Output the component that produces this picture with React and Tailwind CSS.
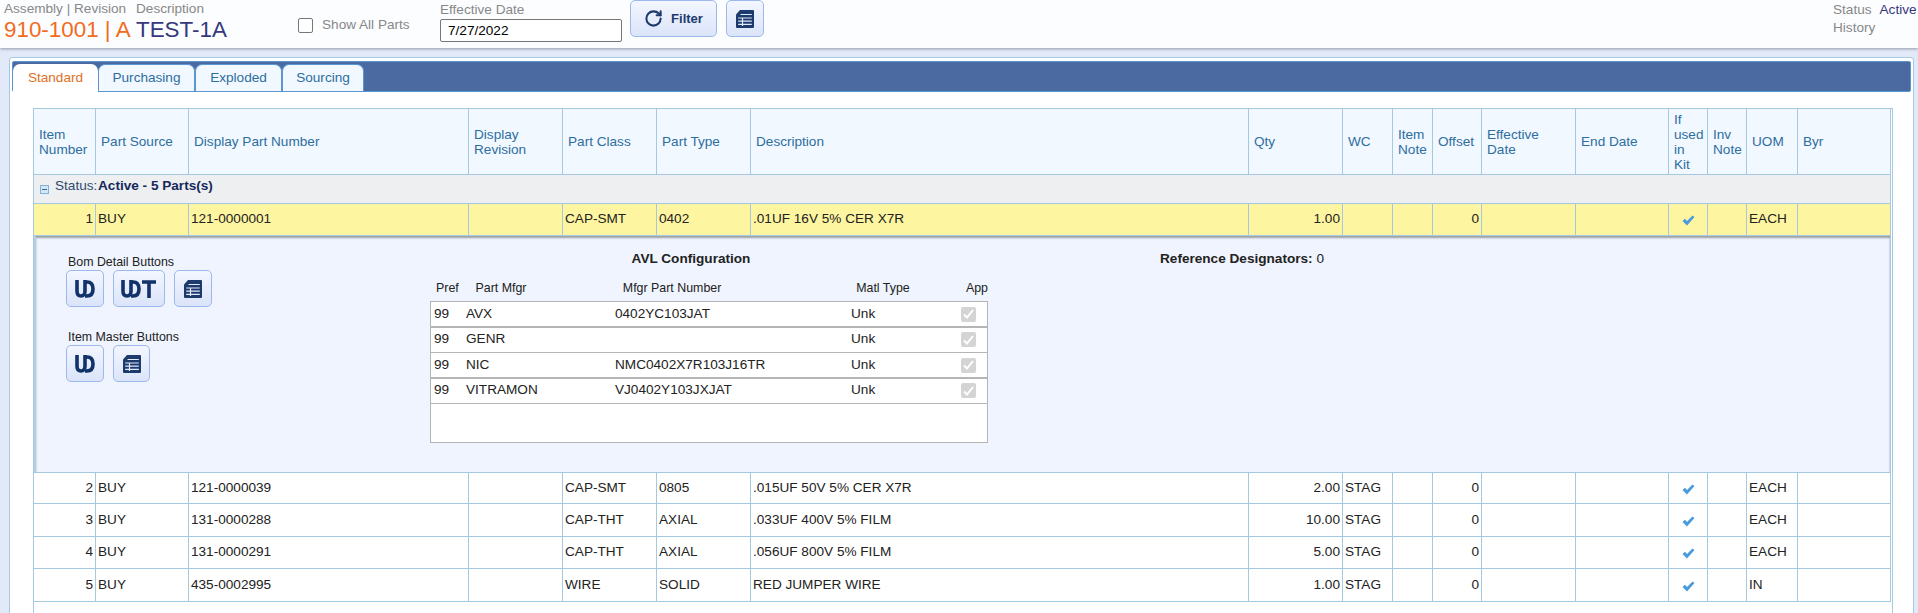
import React from 'react';
import { RotateCw } from 'lucide-react';

const COLS = [
  { key: 'item', label: 'Item\nNumber', w: 62 },
  { key: 'source', label: 'Part Source', w: 93 },
  { key: 'part', label: 'Display Part Number', w: 280 },
  { key: 'rev', label: 'Display\nRevision', w: 94 },
  { key: 'cls', label: 'Part Class', w: 94 },
  { key: 'type', label: 'Part Type', w: 94 },
  { key: 'desc', label: 'Description', w: 498 },
  { key: 'qty', label: 'Qty', w: 94 },
  { key: 'wc', label: 'WC', w: 50 },
  { key: 'note', label: 'Item\nNote', w: 40 },
  { key: 'offset', label: 'Offset', w: 49 },
  { key: 'eff', label: 'Effective\nDate', w: 94 },
  { key: 'end', label: 'End Date', w: 93 },
  { key: 'kit', label: 'If\nused\nin\nKit', w: 39 },
  { key: 'inv', label: 'Inv\nNote', w: 39 },
  { key: 'uom', label: 'UOM', w: 51 },
  { key: 'byr', label: 'Byr', w: 93 },
];

const ROWS = [
  { n: 2, part: '121-0000039', cls: 'CAP-SMT', type: '0805', desc: '.015UF 50V 5% CER X7R', qty: '2.00', uom: 'EACH', h: 'h-[31px]' },
  { n: 3, part: '131-0000288', cls: 'CAP-THT', type: 'AXIAL', desc: '.033UF 400V 5% FILM', qty: '10.00', uom: 'EACH', h: 'h-[33px]' },
  { n: 4, part: '131-0000291', cls: 'CAP-THT', type: 'AXIAL', desc: '.056UF 800V 5% FILM', qty: '5.00', uom: 'EACH', h: 'h-[32px]' },
  { n: 5, part: '435-0002995', cls: 'WIRE', type: 'SOLID', desc: 'RED JUMPER WIRE', qty: '1.00', uom: 'IN', h: 'h-[33px]' },
];

const AVL = [
  { mfgr: 'AVX', num: '0402YC103JAT', line: 'h-[26px] border-b-2' },
  { mfgr: 'GENR', num: '', line: 'h-[25px] border-b pb-[1px]' },
  { mfgr: 'NIC', num: 'NMC0402X7R103J16TR', line: 'h-[26px] border-b-2' },
  { mfgr: 'VITRAMON', num: 'VJ0402Y103JXJAT', line: 'h-[25px] border-b pb-[1px]' },
];

const cell = 'border-r border-b border-[#a6c9e2] px-[2px] align-middle text-[13.6px] leading-[15px] text-[#222]';

const TableIcon = ({ size = 20 }) => (
  <svg width={size} height={size} viewBox="0 0 20 20">
    <path d="M5 1H18a1 1 0 0 1 1 1V18a1 1 0 0 1-1 1H2a1 1 0 0 1-1-1V5.500Z" fill="#1d3a6d" />
    <path d="M5.500 5.500H16.800M3.200 9H16.800M3.200 12.200H16.800M3.200 15.400H16.800M7.500 9V17" stroke="#e3eafa" strokeWidth="1.200" fill="none" />
  </svg>
);

// the U and D run together in this glyph, so it is drawn as one mark
const UdIcon = ({ withT }) => (
  <svg width={withT ? 36 : 20} height="18" viewBox={withT ? '0 0 36 18' : '0 0 20 18'} fill="none" stroke="#12326a" strokeWidth="3.600">
    <path d="M2 0V11Q2 16 6 16Q10 16 10 11V0" />
    <path d="M10 2H12Q18 2 18 9Q18 16 12 16H10" />
    {withT && <path d="M21 2H35M28 2V18" />}
  </svg>
);

const IconButton = ({ className, children }) => (
  <button className={`flex items-center justify-center rounded-[5px] border border-[#9db8ec] bg-gradient-to-b from-[#f3f6ff] to-[#dbe4f9] ${className}`}>
    {children}
  </button>
);

const Check = () => (
  <svg width="13" height="11" viewBox="0 0 13 11" className="mx-auto mt-[4px]">
    <path d="M0.500 6L3 3.800L5 6L10.500 0.500L12.500 2L5 10.500Z" fill="#4a9bdc" />
  </svg>
);

const Header = () => (
  <div className="relative z-10 flex h-[48px] bg-[#fcfdff] text-[#888] shadow-[0_1px_3px_rgba(0,0,0,0.35)]">
    <div className="w-[298px] pl-[4px]">
      <div className="flex h-[18px] items-center text-[13.6px] leading-[18px]">
        <span className="w-[132px]">Assembly | Revision</span>
        <span>Description</span>
      </div>
      <div className="flex text-[22.4px] leading-[24px]">
        <span className="w-[132px] text-[#f26b21]">910-1001 | A</span>
        <span className="text-[#36387d]">TEST-1A</span>
      </div>
    </div>
    <label className="flex w-[142px] items-center pt-[2px] text-[13.6px]">
      <input type="checkbox" className="h-[15px] w-[15px] appearance-none rounded-[2px] border border-[#777] bg-white" />
      <span className="ml-[9px]">Show All Parts</span>
    </label>
    <div className="w-[190px]">
      <div className="h-[18px] text-[13.6px] leading-[20px]">Effective Date</div>
      <input
        readOnly
        value="7/27/2022"
        className="h-[23px] w-[182px] rounded-[2px] border border-[#767676] bg-white px-[7px] text-[13.6px] text-black outline-none"
      />
    </div>
    <IconButton className="h-[37px] w-[87px] gap-[8px]">
      <RotateCw size={19} strokeWidth={2.6} color="#1d3a6d" />
      <span className="text-[13px] font-bold text-[#1d3a6d]">Filter</span>
    </IconButton>
    <IconButton className="ml-[9px] h-[37px] w-[38px]">
      <TableIcon />
    </IconButton>
    <div className="ml-auto w-[85px] pt-[1px] text-[13.6px] leading-[18px]">
      <div className="whitespace-nowrap">
        <span className="mr-[8px]">Status</span>
        <span className="text-[#36387d]">Active</span>
      </div>
      <div>History</div>
    </div>
  </div>
);

const TABS = [
  { label: 'Standard', className: 'mb-[-1px] h-[28px] w-[85px] bg-white text-[#e0701f]' },
  { label: 'Purchasing', className: 'h-[27px] w-[97px] border border-b-0 border-[#5a96d0] bg-[#f1f8ff] text-[#2e6e9e]' },
  { label: 'Exploded', className: 'h-[27px] w-[87px] border border-b-0 border-[#5a96d0] bg-[#f1f8ff] text-[#2e6e9e]' },
  { label: 'Sourcing', className: 'h-[27px] w-[82px] border border-b-0 border-[#5a96d0] bg-[#f1f8ff] text-[#2e6e9e]' },
];

const Tabs = () => (
  <div className="ml-[2px] mr-[2px] mt-[3px] flex h-[31px] items-end rounded-[2px] border border-[#5a96d0] bg-[#4a6aa1]">
    {TABS.map((tab) => (
      <div key={tab.label} className={`flex items-center justify-center rounded-t-[7px] text-[13.6px] ${tab.className}`}>
        {tab.label}
      </div>
    ))}
  </div>
);

const AvlGrid = () => (
  <div className="w-[558px] shrink-0 pt-[14px]">
    <div className="pr-[36px] text-center text-[13.6px] font-bold leading-[18px] text-[#222]">AVL Configuration</div>
    <div className="mt-[11px] flex h-[18px] text-[12.4px] leading-[18px] text-[#222]">
      <span className="ml-[6px] w-[40px]">Pref</span>
      <span className="w-[149px]">Part Mfgr</span>
      <span className="w-[236px]">Mfgr Part Number</span>
      <span className="w-[111px]">Matl Type</span>
      <span>App</span>
    </div>
    <div className="mt-[4px] h-[142px] w-[558px] border border-[#b5b5b5] bg-white text-[13.6px] text-[#222]">
      {AVL.map((r) => (
        <div key={r.mfgr} className={`flex items-center border-[#b5b5b5] ${r.line}`}>
          <span className="ml-[3px] w-[32px]">99</span>
          <span className="w-[149px]">{r.mfgr}</span>
          <span className="w-[236px]">{r.num}</span>
          <span className="w-[110px]">Unk</span>
          <span className="flex h-[15px] w-[15px] items-center justify-center rounded-[2px] bg-[#d4d4d4]">
            <svg width="11" height="10" viewBox="0 0 11 10" fill="none" stroke="#fff" strokeWidth="2">
              <path d="M1 5.500L4 8.500L10 1" />
            </svg>
          </span>
        </div>
      ))}
    </div>
  </div>
);

const Detail = () => (
  <div className="flex h-[236px] border-l-[2px] border-[#b3cfe0] bg-[#eff4fe] shadow-[inset_0_2px_2px_rgba(90,90,90,0.55)]">
    <div className="w-[394px] shrink-0 pl-[30px] pt-[17px] text-[12.4px] leading-[18px] text-[#222]">
      <div className="ml-[2px]">Bom Detail Buttons</div>
      <div className="mt-[-1px] flex gap-[9px]">
        <IconButton className="h-[37px] w-[38px]"><UdIcon /></IconButton>
        <IconButton className="h-[37px] w-[52px]"><UdIcon withT /></IconButton>
        <IconButton className="h-[37px] w-[38px]"><TableIcon /></IconButton>
      </div>
      <div className="ml-[2px] mt-[21px]">Item Master Buttons</div>
      <div className="mt-[-1px] flex gap-[9px]">
        <IconButton className="h-[37px] w-[38px]"><UdIcon /></IconButton>
        <IconButton className="h-[37px] w-[37px]"><TableIcon /></IconButton>
      </div>
    </div>
    <AvlGrid />
    <div className="ml-[172px] pt-[14px] text-[13.6px] leading-[18px] text-[#222]">
      <span className="font-bold">Reference Designators:</span> 0
    </div>
  </div>
);

const RowCells = ({ n, part, cls, type, desc, qty, wc, uom, tone = '' }) => {
  const td = `${cell} ${tone} pb-[2px]`;
  return (
    <>
      <td className={`${td} text-right`}>{n}</td>
      <td className={td}>BUY</td>
      <td className={td}>{part}</td>
      <td className={td} />
      <td className={td}>{cls}</td>
      <td className={td}>{type}</td>
      <td className={td}>{desc}</td>
      <td className={`${td} text-right`}>{qty}</td>
      <td className={td}>{wc}</td>
      <td className={td} />
      <td className={`${td} text-right`}>0</td>
      <td className={td} />
      <td className={td} />
      <td className={td}><Check /></td>
      <td className={td} />
      <td className={td}>{uom}</td>
      <td className={td} />
    </>
  );
};

const BomTable = () => (
  <div className="ml-[23px] h-[600px] w-[1860px] border-x border-t border-[#a6c9e2]">
    <table className="w-[1857px] table-fixed border-separate border-spacing-0">
      <colgroup>
        {COLS.map((c) => <col key={c.key} style={{ width: c.w }} />)}
      </colgroup>
      <thead>
        <tr className="h-[66px]">
          {COLS.map((c) => (
            <th key={c.key} className={`${cell} whitespace-pre-line bg-[#f1f8ff] !pl-[5px] !pr-0 text-left font-normal !text-[#2e6e9e]`}>
              {c.label}
            </th>
          ))}
        </tr>
      </thead>
      <tbody>
        <tr className="h-[29px]">
          <td colSpan={17} className="border-r border-b border-[#a6c9e2] bg-[#eeeff1] text-[13.6px] text-[#222]">
            <div className="flex items-center pl-[6px]">
              <span className="mr-[6px] mt-[2px] flex h-[9px] w-[9px] items-center justify-center border border-[#7fb2dc] bg-[#d5e6f6]">
                <span className="h-[1px] w-[5px] bg-[#2e6e9e]" />
              </span>
              <span className="mb-[6px] w-[43px] text-[#2e4a6e]">Status:</span>
              <span className="mb-[6px] font-bold text-[#14295c]">Active - 5 Parts(s)</span>
            </div>
          </td>
        </tr>
        <tr className="h-[32px]">
          <RowCells n={1} part="121-0000001" cls="CAP-SMT" type="0402" desc=".01UF 16V 5% CER X7R" qty="1.00" wc="" uom="EACH" tone="bg-[#fef5a0]" />
        </tr>
        <tr>
          <td colSpan={17} className="border-r border-b border-[#a6c9e2] p-0"><Detail /></td>
        </tr>
        {ROWS.map((r) => (
          <tr key={r.n} className={r.h}>
            <RowCells {...r} wc="STAG" />
          </tr>
        ))}
      </tbody>
    </table>
  </div>
);

export default function App() {
  return (
    <div className="h-[613px] w-[1918px] overflow-hidden bg-[#e2eafa] font-['Liberation_Sans',Arial,sans-serif]">
      <Header />
      <div className="ml-[9px] mt-[9px] h-[600px] w-[1905px] rounded-t-[3px] border border-[#a6c9e2] bg-white">
        <Tabs />
        <div className="h-[16px]" />
        <BomTable />
      </div>
    </div>
  );
}
